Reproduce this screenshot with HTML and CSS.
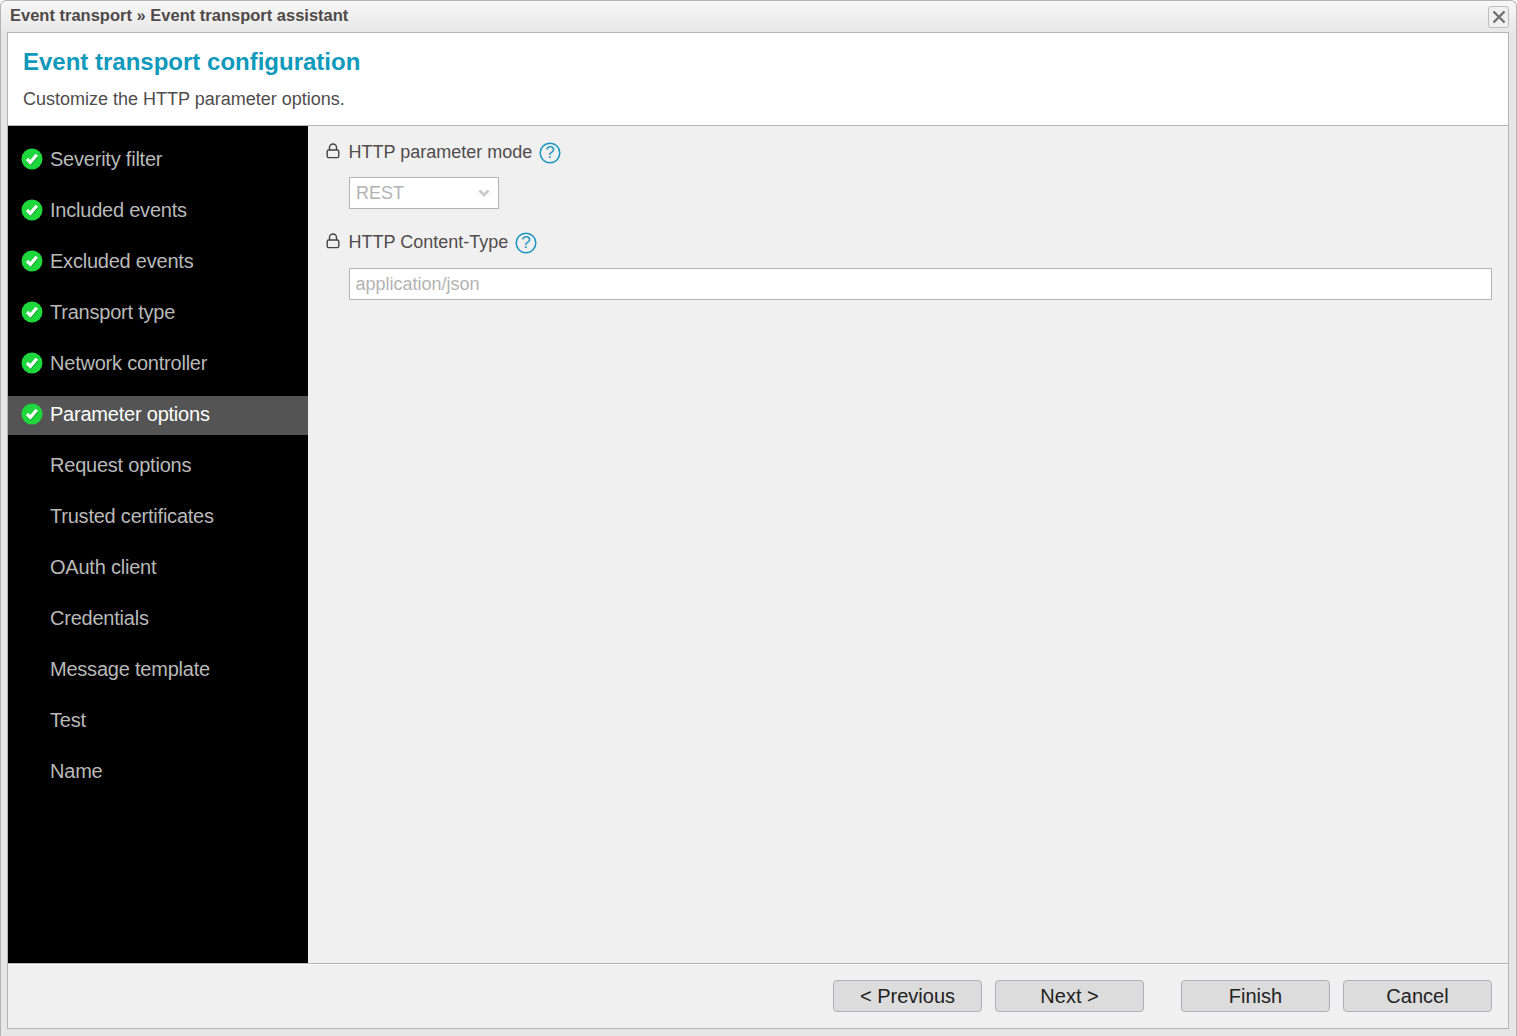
FILE: index.html
```html
<!DOCTYPE html>
<html lang="en">
<head>
<meta charset="utf-8">
<title>Event transport assistant</title>
<link rel="stylesheet" href="styles.css">
</head>
<body>
<div class="window">
  <header class="titlebar">
    <span class="crumbs">Event transport » Event transport assistant</span>
    <button class="close" aria-label="Close">
      <svg width="14" height="14" viewBox="0 0 14 14"><path d="M1.5 1.5 12.5 12.5M12.5 1.5 1.5 12.5" stroke="#727272" stroke-width="2.4" fill="none"/></svg>
    </button>
  </header>
  <div class="panel">
    <div class="intro">
      <h1>Event transport configuration</h1>
      <p>Customize the HTTP parameter options.</p>
    </div>
    <div class="middle">
      <nav class="steps">
        <div class="step"><svg class="check" viewBox="0 0 22 22"><circle cx="11" cy="11" r="10.5" fill="#1ed73c"/><path d="M6.6 12.4 9.8 15.6 16 8.6" stroke="#12a52c" stroke-width="3" fill="none"/><path d="M6 11 9.4 14.4 15.8 6.8" stroke="#fff" stroke-width="3.2" fill="none"/></svg><span>Severity filter</span></div>
        <div class="step"><svg class="check" viewBox="0 0 22 22"><circle cx="11" cy="11" r="10.5" fill="#1ed73c"/><path d="M6.6 12.4 9.8 15.6 16 8.6" stroke="#12a52c" stroke-width="3" fill="none"/><path d="M6 11 9.4 14.4 15.8 6.8" stroke="#fff" stroke-width="3.2" fill="none"/></svg><span>Included events</span></div>
        <div class="step"><svg class="check" viewBox="0 0 22 22"><circle cx="11" cy="11" r="10.5" fill="#1ed73c"/><path d="M6.6 12.4 9.8 15.6 16 8.6" stroke="#12a52c" stroke-width="3" fill="none"/><path d="M6 11 9.4 14.4 15.8 6.8" stroke="#fff" stroke-width="3.2" fill="none"/></svg><span>Excluded events</span></div>
        <div class="step"><svg class="check" viewBox="0 0 22 22"><circle cx="11" cy="11" r="10.5" fill="#1ed73c"/><path d="M6.6 12.4 9.8 15.6 16 8.6" stroke="#12a52c" stroke-width="3" fill="none"/><path d="M6 11 9.4 14.4 15.8 6.8" stroke="#fff" stroke-width="3.2" fill="none"/></svg><span>Transport type</span></div>
        <div class="step"><svg class="check" viewBox="0 0 22 22"><circle cx="11" cy="11" r="10.5" fill="#1ed73c"/><path d="M6.6 12.4 9.8 15.6 16 8.6" stroke="#12a52c" stroke-width="3" fill="none"/><path d="M6 11 9.4 14.4 15.8 6.8" stroke="#fff" stroke-width="3.2" fill="none"/></svg><span>Network controller</span></div>
        <div class="step current"><svg class="check" viewBox="0 0 22 22"><circle cx="11" cy="11" r="10.5" fill="#1ed73c"/><path d="M6.6 12.4 9.8 15.6 16 8.6" stroke="#12a52c" stroke-width="3" fill="none"/><path d="M6 11 9.4 14.4 15.8 6.8" stroke="#fff" stroke-width="3.2" fill="none"/></svg><span>Parameter options</span></div>
        <div class="step todo"><span>Request options</span></div>
        <div class="step todo"><span>Trusted certificates</span></div>
        <div class="step todo"><span>OAuth client</span></div>
        <div class="step todo"><span>Credentials</span></div>
        <div class="step todo"><span>Message template</span></div>
        <div class="step todo"><span>Test</span></div>
        <div class="step todo"><span>Name</span></div>
      </nav>
      <main class="form">
        <div class="label">
          <svg class="lock" viewBox="0 0 14 16"><path d="M3.5 7V4.5a3.5 3.5 0 0 1 7 0V7" fill="none" stroke="#444" stroke-width="1.4"/><rect x="1.2" y="7" width="11.6" height="7.6" rx="1.6" fill="none" stroke="#444" stroke-width="1.4"/></svg>
          <span>HTTP parameter mode</span>
          <svg class="help" viewBox="0 0 22 22"><circle cx="11" cy="11" r="9.8" fill="none" stroke="#1a96c0" stroke-width="1.5"/><text x="11" y="16" text-anchor="middle" class="help-q">?</text></svg>
        </div>
        <div class="select">
          <span>REST</span>
          <svg class="chev" viewBox="0 0 12 8"><path d="M1.5 1.5 6 6 10.5 1.5" fill="none" stroke="#ccc" stroke-width="3"/></svg>
        </div>
        <div class="label second">
          <svg class="lock" viewBox="0 0 14 16"><path d="M3.5 7V4.5a3.5 3.5 0 0 1 7 0V7" fill="none" stroke="#444" stroke-width="1.4"/><rect x="1.2" y="7" width="11.6" height="7.6" rx="1.6" fill="none" stroke="#444" stroke-width="1.4"/></svg>
          <span>HTTP Content-Type</span>
          <svg class="help" viewBox="0 0 22 22"><circle cx="11" cy="11" r="9.8" fill="none" stroke="#1a96c0" stroke-width="1.5"/><text x="11" y="16" text-anchor="middle" class="help-q">?</text></svg>
        </div>
        <div class="textbox">application/json</div>
      </main>
    </div>
    <footer class="actions">
      <button class="btn">&lt; Previous</button>
      <button class="btn">Next &gt;</button>
      <button class="btn finish">Finish</button>
      <button class="btn">Cancel</button>
    </footer>
  </div>
</div>
</body>
</html>
```

FILE: styles.css
```css
* { box-sizing: border-box; }
html, body { margin: 0; height: 100%; }
body { background: #fff; font-family: "Liberation Sans", Arial, sans-serif; overflow: hidden; }
.window {
  height: 1036px;
  width: 1517px;
  display: flex;
  flex-direction: column;
  background: #e6e6e6;
  border: 1px solid #b4b4b4;
  border-bottom: 0;
  border-radius: 6px 6px 0 0;
  padding: 0 7px 7px 6px;
}
.titlebar {
  height: 31px;
  flex: none;
  margin: 0 -7px 0 -6px;
  padding: 0 7px 0 9px;
  display: flex;
  align-items: center;
  justify-content: space-between;
  background: linear-gradient(#f7f7f7, #e8e8e8);
  border-radius: 6px 6px 0 0;
}
.crumbs { font-size: 16.5px; font-weight: bold; color: #4f4a48; margin-top: -2px; }
.close {
  width: 21px;
  height: 22px;
  padding: 0;
  margin-top: 1px;
  display: flex;
  align-items: center;
  justify-content: center;
  background: #f0f0f0;
  border: 1px solid #bdbdbd;
  border-radius: 3px;
}
.panel {
  flex: 1;
  display: flex;
  flex-direction: column;
  border: 1px solid #b4b4b4;
  background: #f0f0f0;
}
.intro {
  height: 93px;
  flex: none;
  background: #fff;
  border-bottom: 1px solid #b4b4b4;
  padding: 14px 15px 0;
}
.intro h1 { margin: 0; font-size: 24px; line-height: 30px; font-weight: bold; color: #0f99bb; }
.intro p { margin: 11px 0 0; font-size: 18px; line-height: 22px; color: #504c4c; }
.middle { flex: 1; display: flex; min-height: 0; }
.steps { width: 300px; flex: none; background: #000; padding-top: 15px; }
.step {
  height: 39px;
  margin-bottom: 12px;
  padding: 0 0 3px 13px;
  display: flex;
  align-items: center;
  gap: 7px;
  font-size: 20px;
  letter-spacing: -0.22px;
  color: #b9b9b9;
}
.step.current { background: #545454; color: #fff; }
.step.todo { padding-left: 42px; }
.check { width: 22px; height: 22px; flex: none; }
.form { flex: 1; padding: 14px 16px 0 18px; }
.label { display: flex; align-items: center; height: 24px; font-size: 18px; color: #504c4c; }
.label.second { margin-top: 21px; }
.lock { width: 14px; height: 16px; flex: none; margin-right: 8.5px; margin-top: -2px; }
.help { width: 22px; height: 22px; flex: none; margin-left: 7px; margin-top: 2px; }
.help-q { font-size: 17px; fill: #1a96c0; font-family: "Liberation Sans", Arial, sans-serif; }
.select {
  width: 150px;
  height: 32px;
  margin: 13px 0 0 23px;
  padding: 0 8px 0 6px;
  display: flex;
  align-items: center;
  justify-content: space-between;
  background: #fff;
  border: 1px solid #b4b4b4;
  font-size: 18px;
  color: #b3b3b3;
}
.chev { width: 12px; height: 8px; }
.textbox {
  height: 32px;
  margin: 14px 0 0 23px;
  padding: 0 5.5px;
  display: flex;
  align-items: center;
  background: #fff;
  border: 1px solid #b4b4b4;
  font-size: 18px;
  color: #b3b3b3;
}
.actions {
  height: 65px;
  flex: none;
  border-top: 1px solid #b4b4b4;
  box-shadow: inset 0 1px 0 #fff;
  padding: 16px 16px 0 0;
  display: flex;
  justify-content: flex-end;
  gap: 13px;
}
.btn {
  width: 149px;
  height: 32px;
  padding: 0;
  background: #dcdcdc;
  border: 1px solid #aeaeb4;
  border-radius: 4px;
  font: 20px "Liberation Sans", Arial, sans-serif;
  color: #222;
}
.btn.finish { margin-left: 24px; }
```
